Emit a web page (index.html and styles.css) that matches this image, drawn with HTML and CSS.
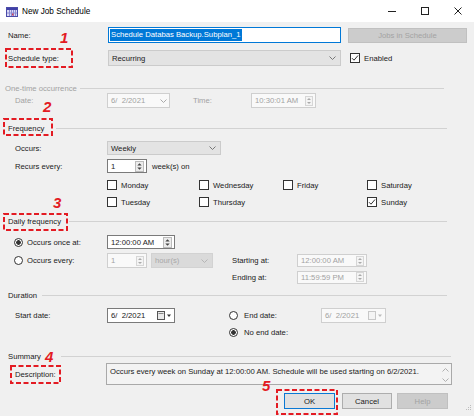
FILE: index.html
```html
<!DOCTYPE html>
<html>
<head>
<meta charset="utf-8">
<title>New Job Schedule</title>
<link rel="stylesheet" href="styles.css">
</head>
<body>
<div class="window">
  <div class="titlebar">
    <svg class="app-icon" width="12" height="10" viewBox="0 0 12 10">
      <rect x="0.5" y="0.5" width="11" height="9" fill="#d9d9f5" stroke="#4b4ba8"/>
      <rect x="1" y="1" width="10" height="2" fill="#4040a8"/>
      <path d="M3.5 3v6M5.5 3v6M7.5 3v6M9.5 3v6M1 6h10" stroke="#8a8ad0" stroke-width="1"/>
      <rect x="6" y="6.5" width="1.5" height="2" fill="#d0405a"/>
    </svg>
    <span class="title">New Job Schedule</span>
    <div class="winctl">
      <span class="wb"><svg width="10" height="10" viewBox="0 0 10 10"><path d="M1 5.5h8" stroke="#222" stroke-width="1"/></svg></span>
      <span class="wb"><svg width="10" height="10" viewBox="0 0 10 10"><rect x="1.5" y="1.5" width="7" height="7" fill="none" stroke="#222"/></svg></span>
      <span class="wb"><svg width="10" height="10" viewBox="0 0 10 10"><path d="M1.5 1.5l7 7M8.5 1.5l-7 7" stroke="#222"/></svg></span>
    </div>
  </div>

  <div class="form">
    <div class="row r-name">
      <span class="lbl">Name:</span>
      <div class="tb focus name-tb"><span class="sel">Schedule Databas Backup.Subplan_1</span></div>
      <div class="btn dis jobs">Jobs in Schedule</div>
    </div>

    <div class="row r-sched">
      <span class="lbl">Schedule type:</span>
      <div class="combo sched-combo"><span>Recurring</span><svg class="chev" width="7" height="4" viewBox="0 0 7 4"><path d="M0.5 0.5L3.5 3.5L6.5 0.5" fill="none" stroke="#777"/></svg></div>
      <div class="chk enabled"><span class="cb"><svg width="8" height="8" viewBox="0 0 8 8"><path d="M1 4.2L3 6.2L7 1.5" fill="none" stroke="#333" stroke-width="1"/></svg></span>Enabled</div>
    </div>

    <div class="hdr h-onetime"><span class="grey">One-time occurrence</span><span class="line"></span></div>

    <div class="row ind r-date">
      <span class="lbl grey">Date:</span>
      <div class="tb dis date-dis"><span>6/&nbsp; 2/2021</span><svg class="chev" width="7" height="4" viewBox="0 0 7 4"><path d="M0.5 0.5L3.5 3.5L6.5 0.5" fill="none" stroke="#aaa"/></svg></div>
      <span class="grey time-lbl">Time:</span>
      <div class="tb dis time-dis"><span>10:30:01 AM</span><svg class="spin" width="8" height="10" viewBox="0 0 8 10"><rect x="0.5" y="0.5" width="7" height="9" fill="#f4f4f4" stroke="#d6d6d6"/><path d="M2 4L4 2L6 4ZM2 6L4 8L6 6Z" fill="#aaa"/></svg></div>
    </div>

    <div class="hdr h-freq"><span>Frequency</span><span class="line"></span></div>

    <div class="row ind r-occurs">
      <span class="lbl">Occurs:</span>
      <div class="combo weekly"><span>Weekly</span><svg class="chev" width="7" height="4" viewBox="0 0 7 4"><path d="M0.5 0.5L3.5 3.5L6.5 0.5" fill="none" stroke="#777"/></svg></div>
    </div>

    <div class="row ind r-recurs">
      <span class="lbl">Recurs every:</span>
      <div class="tb en spin-tb"><span>1</span><svg class="spin" width="9" height="11" viewBox="0 0 9 11"><rect x="0.5" y="0.5" width="8" height="10" fill="#ececec" stroke="#bbb"/><path d="M2.3 4.6L4.5 2.2L6.7 4.6ZM2.3 6.4L4.5 8.8L6.7 6.4Z" fill="#444"/></svg></div>
      <span class="weeks">week(s) on</span>
    </div>

    <div class="row cbrow r-cb1">
      <div class="chk c1"><span class="cb"></span>Monday</div>
      <div class="chk c2"><span class="cb"></span>Wednesday</div>
      <div class="chk c3"><span class="cb"></span>Friday</div>
      <div class="chk"><span class="cb"></span>Saturday</div>
    </div>
    <div class="row cbrow r-cb2">
      <div class="chk c1"><span class="cb"></span>Tuesday</div>
      <div class="chk c2"><span class="cb"></span>Thursday</div>
      <div class="chk c3"></div>
      <div class="chk"><span class="cb"><svg width="8" height="8" viewBox="0 0 8 8"><path d="M1 4.2L3 6.2L7 1.5" fill="none" stroke="#333" stroke-width="1"/></svg></span>Sunday</div>
    </div>

    <div class="hdr h-daily"><span>Daily frequency</span><span class="line"></span></div>

    <div class="row r-once">
      <div class="rlbl"><span class="rb on"></span>Occurs once at:</div>
      <div class="tb en once-tb"><span>12:00:00 AM</span><svg class="spin" width="9" height="11" viewBox="0 0 9 11"><rect x="0.5" y="0.5" width="8" height="10" fill="#ececec" stroke="#bbb"/><path d="M2.3 4.6L4.5 2.2L6.7 4.6ZM2.3 6.4L4.5 8.8L6.7 6.4Z" fill="#444"/></svg></div>
    </div>

    <div class="row r-every">
      <div class="rlbl"><span class="rb"></span>Occurs every:</div>
      <div class="tb dis every-tb"><span>1</span><svg class="spin" width="8" height="10" viewBox="0 0 8 10"><rect x="0.5" y="0.5" width="7" height="9" fill="#f4f4f4" stroke="#d6d6d6"/><path d="M2 4L4 2L6 4ZM2 6L4 8L6 6Z" fill="#aaa"/></svg></div>
      <div class="combo dis hours"><span>hour(s)</span><svg class="chev" width="7" height="4" viewBox="0 0 7 4"><path d="M0.5 0.5L3.5 3.5L6.5 0.5" fill="none" stroke="#b5b5b5"/></svg></div>
      <span class="side-lbl start-lbl">Starting at:</span>
      <div class="tb dis range-tb start-tb"><span>12:00:00 AM</span><svg class="spin" width="8" height="10" viewBox="0 0 8 10"><rect x="0.5" y="0.5" width="7" height="9" fill="#f4f4f4" stroke="#d6d6d6"/><path d="M2 4L4 2L6 4ZM2 6L4 8L6 6Z" fill="#aaa"/></svg></div>
    </div>

    <div class="row r-ending">
      <span class="side-lbl">Ending at:</span>
      <div class="tb dis range-tb"><span>11:59:59 PM</span><svg class="spin" width="8" height="10" viewBox="0 0 8 10"><rect x="0.5" y="0.5" width="7" height="9" fill="#f4f4f4" stroke="#d6d6d6"/><path d="M2 4L4 2L6 4ZM2 6L4 8L6 6Z" fill="#aaa"/></svg></div>
    </div>

    <div class="hdr h-duration"><span>Duration</span><span class="line"></span></div>

    <div class="row ind r-start">
      <span class="lbl">Start date:</span>
      <div class="tb en startdate-tb"><span>6/&nbsp; 2/2021</span><svg class="cal" width="15" height="9" viewBox="0 0 15 9"><rect x="0.5" y="0.5" width="7" height="8" fill="#eaeaea" stroke="#555"/><path d="M1.5 2.5h5" stroke="#888"/><path d="M10 3.5h4l-2 2.5z" fill="#333"/></svg></div>
      <div class="rlbl end-rlbl"><span class="rb"></span>End date:</div>
      <div class="tb dis enddate-tb"><span>6/&nbsp; 2/2021</span><svg class="cal" width="15" height="9" viewBox="0 0 15 9"><rect x="0.5" y="0.5" width="7" height="8" fill="#f4f4f4" stroke="#c8c8c8"/><path d="M10 3.5h4l-2 2.5z" fill="#bbb"/></svg></div>
    </div>

    <div class="row r-noend">
      <div class="rlbl"><span class="rb on"></span>No end date:</div>
    </div>

    <div class="hdr h-summary"><span>Summary</span><span class="line"></span></div>

    <div class="row ind r-desc">
      <span class="lbl desc-lbl">Description:</span>
      <div class="desc-tb">
        <span class="desc-text">Occurs every week on Sunday at 12:00:00 AM. Schedule will be used starting on 6/2/2021.</span>
        <div class="vscroll">
          <svg width="7" height="4" viewBox="0 0 7 4"><path d="M0.5 3.5L3.5 0.5L6.5 3.5" fill="none" stroke="#b0b0b0"/></svg>
          <svg width="7" height="4" viewBox="0 0 7 4"><path d="M0.5 0.5L3.5 3.5L6.5 0.5" fill="none" stroke="#b0b0b0"/></svg>
        </div>
      </div>
    </div>

    <div class="row r-buttons">
      <div class="btn ok">OK</div>
      <div class="btn cancel">Cancel</div>
      <div class="btn dis help">Help</div>
      <svg class="grip" width="8" height="8" viewBox="0 0 8 8"><g fill="#bdbdbd"><rect x="6" y="0" width="1" height="1"/><rect x="4" y="2" width="1" height="1"/><rect x="6" y="2" width="1" height="1"/><rect x="2" y="4" width="1" height="1"/><rect x="4" y="4" width="1" height="1"/><rect x="6" y="4" width="1" height="1"/></g></svg>
    </div>
  </div>

  <svg class="marks" width="474" height="416" viewBox="0 0 474 416">
    <g fill="none" stroke="#e31b23" stroke-width="2" stroke-dasharray="5 2.5">
      <rect x="6" y="49" width="66" height="18"/>
      <rect x="4" y="119" width="48" height="16"/>
      <rect x="4" y="214" width="63" height="16"/>
      <rect x="11" y="366" width="49" height="17"/>
      <rect x="277" y="390" width="60" height="24"/>
    </g>
  </svg>
  <span class="num n1">1</span>
  <span class="num n2">2</span>
  <span class="num n3">3</span>
  <span class="num n4">4</span>
  <span class="num n5">5</span>
</div>
</body>
</html>
```

FILE: styles.css
```css
* { box-sizing: border-box; }
html, body { margin: 0; padding: 0; }
body {
  width: 474px;
  height: 416px;
  overflow: hidden;
  background: #f0f0f0;
  font-family: "Liberation Sans", Arial, sans-serif;
  font-size: 7.7px;
  color: #1a1a1a;
}
.window { position: relative; width: 474px; height: 416px; }

/* title bar */
.titlebar {
  height: 22px;
  background: #ffffff;
  display: flex;
  align-items: center;
  padding-left: 6px;
}
.app-icon { flex: none; margin-right: 4px; margin-top: 1px; }
.title { flex: 1; font-size: 8.2px; color: #000; }
.winctl { display: flex; height: 22px; }
.wb { width: 33px; height: 22px; display: flex; align-items: center; justify-content: center; }

/* rows */
.row { display: flex; align-items: center; padding-left: 8px; flex: none; }
.ind { padding-left: 15px; }
.lbl { width: 99px; flex: none; }
.ind .lbl { width: 92px; }
.grey { color: #a2a2a2; }

.hdr { display: flex; align-items: center; height: 10px; padding-left: 8px; padding-right: 27px; }
.hdr .line { flex: 1; height: 1px; background: #d2d2d2; margin-left: 5px; }

.r-name { margin-top: 5px; height: 16px; }
.r-sched { margin-top: 7px; height: 16px; }
.h-onetime { margin-top: 17px; padding-left: 5px; padding-right: 30px; }
.h-onetime .line { margin-left: 3px; }
.r-date { height: 15px; }
.h-freq { margin-top: 15px; }
.h-freq .line { margin-left: 12px; }
.r-occurs { margin-top: 8px; height: 14px; }
.r-recurs { margin-top: 4px; height: 14px; }
.r-cb1 { margin-top: 7px; height: 10px; }
.r-cb2 { margin-top: 7px; height: 10px; }
.h-daily { margin-top: 9px; }
.h-daily .line { margin-left: 8px; }
.r-once { margin-top: 9px; height: 14px; padding-left: 14px; }
.r-every { margin-top: 4px; height: 15px; padding-left: 14px; }
.r-ending { margin-top: 2px; height: 14px; padding-left: 232px; }
.h-duration { margin-top: 6px; }
.r-start { margin-top: 8px; height: 15px; }
.r-noend { margin-top: 4px; height: 10px; padding-left: 229px; }
.h-summary { margin-top: 14px; padding-right: 23px; }
.h-summary .line { margin-left: 20px; }
.r-desc { margin-top: 2px; height: 22px; }
.r-buttons { margin-top: 8px; height: 16px; padding-left: 284px; }

/* generic controls */
.tb {
  height: 100%;
  display: flex;
  align-items: center;
  padding: 0 2px 0 3px;
  border: 1px solid #7a7a7a;
  background: #ffffff;
  flex: none;
}
.tb .spin, .tb .chev, .tb .cal { margin-left: auto; flex: none; }
.tb.dis { border-color: #cfcfcf; background: #f9f9f9; color: #a2a2a2; }
.focus { border-color: #0078d7; padding-left: 1px; }
.sel { background: #0078d7; color: #fff; line-height: 12px; padding: 0 1px; }

.combo {
  height: 100%;
  display: flex;
  align-items: center;
  padding: 0 4px 0 3px;
  background: #e3e3e3;
  border: 1px solid #cbcbcb;
  flex: none;
}
.combo .chev { margin-left: auto; }
.combo.dis { background: #dadada; border-color: #d2d2d2; color: #a8a8a8; }

.btn {
  display: flex;
  align-items: center;
  justify-content: center;
  height: 16px;
  background: #e1e1e1;
  border: 1px solid #adadad;
  flex: none;
}
.btn.dis { background: #cccccc; border-color: #c0c0c0; color: #a3a3a3; }

.chk { display: flex; align-items: center; flex: none; }
.cb {
  width: 10px; height: 10px;
  border: 1px solid #333;
  background: #fff;
  margin-right: 4px;
  display: flex; align-items: center; justify-content: center;
  flex: none;
}
.rb {
  width: 9px; height: 9px;
  border: 1px solid #333;
  border-radius: 50%;
  background: #fff;
  margin-right: 4px;
  flex: none;
}
.rb.on { background: radial-gradient(circle, #333 0 2px, #fff 2.6px); }
.rlbl { display: flex; align-items: center; width: 93px; flex: none; }

/* specific sizes */
.name-tb { margin-left: 1px; width: 233px; }
.jobs { margin-left: 7px; width: 119px; height: 15px; }
.sched-combo { margin-left: 1px; width: 233px; }
.enabled { margin-left: 9px; }

.date-dis { width: 63px; }
.time-lbl { margin-left: 23px; width: 58px; flex: none; }
.time-dis { width: 65px; }

.weekly { width: 114px; }
.spin-tb { width: 40px; }
.weeks { margin-left: 5px; }

.cbrow { padding-left: 107px; }
.c1 { width: 92px; }
.c2 { width: 84px; }
.c3 { width: 84px; }

.once-tb { width: 68px; }
.every-tb { width: 40px; }
.hours { width: 62px; margin-left: 4px; height: 15px; }
.side-lbl { width: 65px; flex: none; }
.start-lbl { margin-left: 19px; }
.range-tb { width: 70px; height: 13px; }

.startdate-tb { width: 68px; }
.end-rlbl { margin-left: 54px; width: 92px; }
.end-rlbl .rb { margin-right: 6px; }
.r-noend .rb { margin-right: 6px; }
.enddate-tb { width: 65px; }

.desc-lbl { width: 91px !important; }
.desc-tb {
  width: 346px;
  height: 22px;
  border: 1px solid #a9a9a9;
  background: #f3f3f3;
  display: flex;
  align-items: flex-start;
  padding: 4px 0 0 3px;
  flex: none;
}
.desc-text { flex: 1; line-height: 8px; }
.vscroll {
  width: 11px;
  height: 18px;
  margin-top: -2px;
  display: flex;
  flex-direction: column;
  align-items: center;
  justify-content: space-between;
  padding: 2px 0 2px;
}

.ok { width: 51px; border-color: #0a78d4; }
.cancel { width: 50px; margin-left: 7px; }
.help { width: 51px; margin-left: 5px; }
.grip { margin-left: auto; margin-right: 2px; align-self: flex-end; margin-bottom: -4px; }

/* annotation overlay */
.marks { position: absolute; left: 0; top: 0; pointer-events: none; }
.num {
  position: absolute;
  font-family: "Liberation Sans", Arial, sans-serif;
  font-weight: bold;
  font-style: italic;
  font-size: 15px;
  line-height: 11px;
  color: #e31b23;
}
.n1 { left: 60px; top: 32px; }
.n2 { left: 43px; top: 101px; }
.n3 { left: 53px; top: 197px; }
.n4 { left: 45px; top: 351px; }
.n5 { left: 262px; top: 380px; }
```
